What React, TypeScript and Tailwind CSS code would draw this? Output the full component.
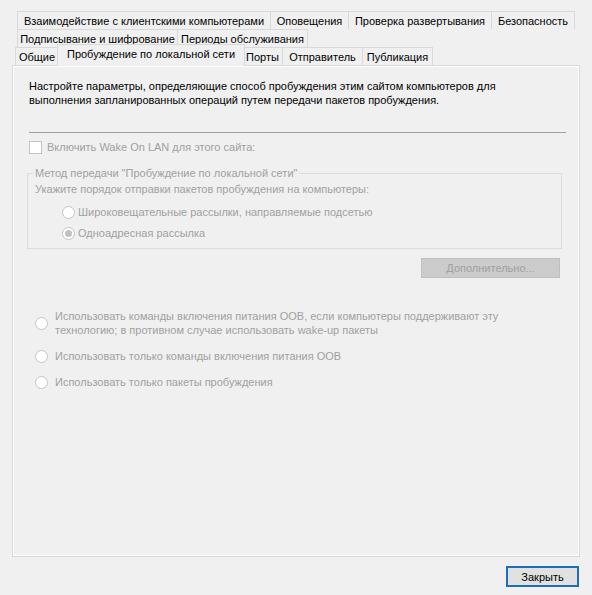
import React from "react";

type TabProps = { label: string; width: number; active?: boolean };

function Tab({ label, width, active }: TabProps) {
  if (active) {
    return (
      <div
        className="relative z-10 -mx-[2px] -mb-px flex h-[22px] flex-none items-start justify-center whitespace-nowrap border-x border-t border-[#d9d9d9] bg-[#f0f0f0] pt-[2px]"
        style={{ width: width + 4 }}
      >
        {label}
      </div>
    );
  }
  return (
    <div
      className="-ml-px flex h-[18px] flex-none items-center justify-center whitespace-nowrap border border-b-0 border-[#d9d9d9] bg-[#f0f0f0] first:ml-0"
      style={{ width }}
    >
      {label}
    </div>
  );
}

function Radio({ checked }: { checked?: boolean }) {
  return (
    <span className="flex h-[13px] w-[13px] flex-none items-center justify-center rounded-full border border-[#c4c4c4] bg-white">
      {checked && <span className="h-[7px] w-[7px] rounded-full bg-[#c0c0c0]" />}
    </span>
  );
}

export default function App() {
  return (
    <div className="flex h-[595px] w-[592px] flex-col bg-[#f0f0f0] font-['Liberation_Sans',sans-serif] text-[11px] text-black">
      <div className="flex flex-col pt-[11px] leading-[14px]">
        <div className="flex pl-[17px]">
          <Tab label="Взаимодействие с клиентскими компьютерами" width={254} />
          <Tab label="Оповещения" width={79} />
          <Tab label="Проверка развертывания" width={144} />
          <Tab label="Безопасность" width={84} />
        </div>
        <div className="flex pl-[17px]">
          <Tab label="Подписывание и шифрование" width={161} />
          <Tab label="Периоды обслуживания" width={131} />
        </div>
        <div className="flex h-[18px] items-end pl-[15px]">
          <Tab label="Общие" width={44} />
          <Tab label="Пробуждение по локальной сети" width={184} active />
          <Tab label="Порты" width={41} />
          <Tab label="Отправитель" width={81} />
          <Tab label="Публикация" width={71} />
        </div>
      </div>

      <div className="mx-[12px] flex h-[492px] flex-col border border-[#d9d9d9] bg-[#f0f0f0] pl-[16px] pt-[13px] leading-[14px] shadow-[inset_0_0_0_1px_#ffffff]">
        <p className="whitespace-nowrap">
          Настройте параметры, определяющие способ пробуждения этим сайтом компьютеров для
          <br />
          выполнения запланированных операций путем передачи пакетов пробуждения.
        </p>
        <div className="mt-[25px] w-[537px] border-t border-[#a0a0a0]" />

        <div className="mt-[7px] flex items-center gap-[5px] text-[#a0a0a0]">
          <span className="h-[13px] w-[13px] border border-[#c4c4c4] bg-white" />
          <span>Включить Wake On LAN для этого сайта:</span>
        </div>

        <fieldset className="-ml-[2px] mt-[12px] w-[535px] border border-[#dcdcdc] pb-[8px] pl-[7px] text-[#a0a0a0]">
          <legend className="-ml-[2px] px-[2px]">Метод передачи "Пробуждение по локальной сети"</legend>
          <div className="mt-[2px]">Укажите порядок отправки пакетов пробуждения на компьютеры:</div>
          <div className="ml-[27px] mt-[9px] flex items-center gap-[3px]">
            <Radio />
            <span>Широковещательные рассылки, направляемые подсетью</span>
          </div>
          <div className="ml-[27px] mt-[7px] flex items-center gap-[3px]">
            <Radio checked />
            <span>Одноадресная рассылка</span>
          </div>
        </fieldset>

        <div className="ml-[392px] mt-[9px] flex h-[20px] w-[139px] items-center justify-center border border-[#bfbfbf] bg-[#cccccc] text-[#a0a0a0]">
          Дополнительно...
        </div>

        <div className="ml-[6px] mt-[31px] flex flex-col text-[#a0a0a0]">
          <div className="flex items-center gap-[7px]">
            <Radio />
            <span>
              Использовать команды включения питания OOB, если компьютеры поддерживают эту
              <br />
              технологию; в противном случае использовать wake-up пакеты
            </span>
          </div>
          <div className="mt-[12px] flex items-center gap-[7px]">
            <Radio />
            <span>Использовать только команды включения питания OOB</span>
          </div>
          <div className="mt-[12px] flex items-center gap-[7px]">
            <Radio />
            <span>Использовать только пакеты пробуждения</span>
          </div>
        </div>
      </div>

      <div className="flex justify-end pr-[13px] pt-[9px]">
        <button
          type="button"
          className="flex h-[21px] w-[73px] items-center justify-center border-2 border-[#1e6db9] bg-[#e1e1e1] leading-[14px]"
        >
          Закрыть
        </button>
      </div>
    </div>
  );
}
